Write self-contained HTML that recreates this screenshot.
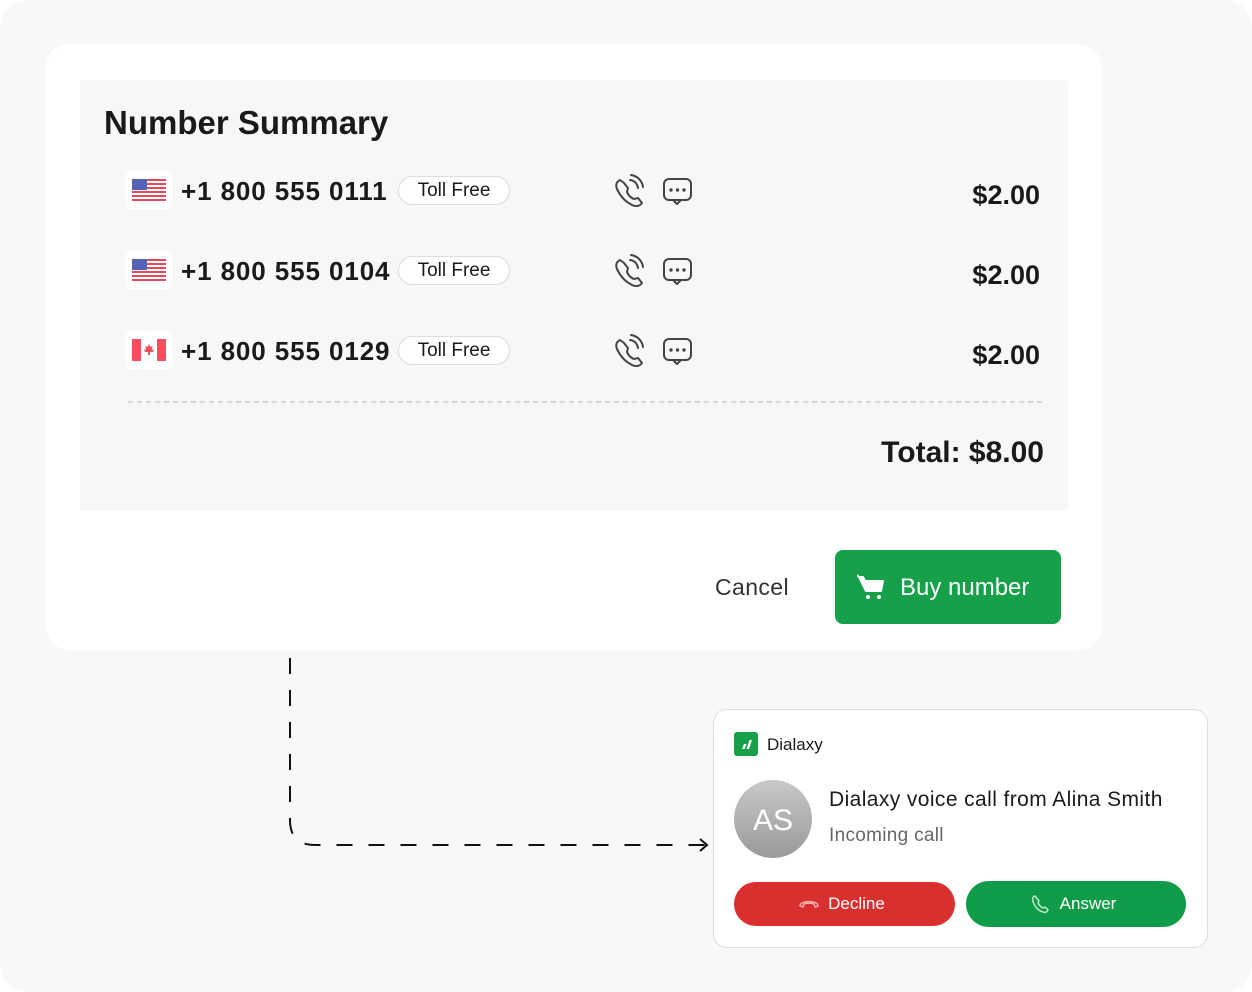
<!DOCTYPE html>
<html><head><style>
*{margin:0;padding:0;box-sizing:border-box}
body{width:1252px;height:992px;background:#fff;font-family:"Liberation Sans",sans-serif;position:relative;overflow:hidden;color:#1a1a1a}
.bg{position:absolute;left:0;top:0;width:1252px;height:992px;background:#f7f8fa;border-radius:28px}
.card{position:absolute;left:46px;top:44px;width:1056px;height:606px;background:#fff;border-radius:24px}
.panel{position:absolute;left:80px;top:80px;width:988px;height:431px;background:#f7f7f7;border-radius:4px}
.abs{position:absolute}
.title{left:104px;top:104px;font-size:33px;font-weight:bold;letter-spacing:0px}
.flag{width:46px;height:38px;background:#fff;border-radius:6px;position:absolute;left:126px}
.num{position:absolute;left:181px;font-size:26px;font-weight:bold;letter-spacing:0.9px}
.pill{position:absolute;left:398px;width:112px;height:29px;border:1px solid #ddd;border-radius:15px;background:#fff;font-size:19px;text-align:center;line-height:27px}
.price{position:absolute;right:212px;font-size:27px;font-weight:bold}
.ic{position:absolute}
</style></head><body>
<div class="bg"></div>
<div class="card"></div>
<div class="panel"></div>
<div class="abs title">Number Summary</div>

<div class="flag" style="top:171px"><svg class="abs" style="left:6px;top:8px" width="34" height="22" viewBox="0 0 34 22"><rect width="34" height="22" fill="#fff" rx="2"/><g fill="#e5485b"><rect y="0" width="34" height="2"/><rect y="4" width="34" height="2"/><rect y="8" width="34" height="2"/><rect y="12" width="34" height="2"/><rect y="16" width="34" height="2"/><rect y="20" width="34" height="2"/></g><rect width="15" height="11" fill="#5561b5"/></svg></div>
<div class="num" style="top:176px">+1 800 555 0111</div>
<div class="pill" style="top:176px">Toll Free</div>
<div class="flag" style="top:251px"><svg class="abs" style="left:6px;top:8px" width="34" height="22" viewBox="0 0 34 22"><rect width="34" height="22" fill="#fff" rx="2"/><g fill="#e5485b"><rect y="0" width="34" height="2"/><rect y="4" width="34" height="2"/><rect y="8" width="34" height="2"/><rect y="12" width="34" height="2"/><rect y="16" width="34" height="2"/><rect y="20" width="34" height="2"/></g><rect width="15" height="11" fill="#5561b5"/></svg></div>
<div class="num" style="top:256px">+1 800 555 0104</div>
<div class="pill" style="top:256px">Toll Free</div>
<div class="flag" style="top:331px"><svg class="abs" style="left:6px;top:8px" width="34" height="22" viewBox="0 0 34 22"><rect width="34" height="22" fill="#fff"/><rect width="9" height="22" fill="#f0505f"/><rect x="25" width="9" height="22" fill="#f0505f"/><path d="M17 5l1.5 3 2-1-0.5 4 2-1-1 3h-3v3h-2v-3h-3l-1-3 2 1-0.5-4 2 1z" fill="#f0505f"/></svg></div>
<div class="num" style="top:336px">+1 800 555 0129</div>
<div class="pill" style="top:336px">Toll Free</div>

<svg class="ic" style="left:0;top:0" width="1252" height="992">
<g fill="none" stroke="#444" stroke-width="2" stroke-linecap="round" stroke-linejoin="round">
<g id="r1">
<path d="M620 180c-4 2-5 6-2 11 3 6 8 11 14 14 4 2 8 1 10-2l-4-5-4 1c-3-1-6-4-7-7l1-4-4-5z"/>
<path d="M630 180a9 9 0 0 1 8 8M631 175a14 14 0 0 1 12 12"/>
<rect x="664" y="179" width="27" height="21" rx="5"/><path d="M673 200l4 4 4-4"/>
</g>
<use href="#r1" y="80"/><use href="#r1" y="160"/>
</g>
<g fill="#444"><circle cx="671" cy="190" r="1.7"/><circle cx="677.5" cy="190" r="1.7"/><circle cx="684" cy="190" r="1.7"/>
<circle cx="671" cy="270" r="1.7"/><circle cx="677.5" cy="270" r="1.7"/><circle cx="684" cy="270" r="1.7"/>
<circle cx="671" cy="350" r="1.7"/><circle cx="677.5" cy="350" r="1.7"/><circle cx="684" cy="350" r="1.7"/></g>
<line x1="128" y1="402" x2="1044" y2="402" stroke="#ccc" stroke-width="1.5" stroke-dasharray="5 4"/>
<path d="M290 658V820q0 25 25 25H706" fill="none" stroke="#111" stroke-width="2" stroke-dasharray="16 16"/>
<path d="M700 839l7 6-7 6" fill="none" stroke="#111" stroke-width="2"/>
</svg>

<div class="price" style="top:180px">$2.00</div>
<div class="price" style="top:260px">$2.00</div>
<div class="price" style="top:340px">$2.00</div>
<div class="abs" style="right:208px;top:436px;font-size:30px;font-weight:bold">Total: $8.00</div>

<div class="abs" style="left:715px;top:574px;font-size:23px;color:#333;letter-spacing:0.4px">Cancel</div>
<div class="abs" style="left:835px;top:550px;width:226px;height:74px;background:#16a04a;border-radius:8px;color:#fff;font-size:24px;line-height:76px;padding-left:65px">Buy number</div>
<svg class="abs" style="left:857px;top:574px" width="30" height="28" viewBox="0 0 30 28"><path d="M2 3h4l2 4h18l-2 10H9z" fill="#fff" stroke="#fff" stroke-width="2" stroke-linejoin="round"/><path d="M2 3L0 1" stroke="#fff" stroke-width="2"/><circle cx="11" cy="23" r="2" fill="#fff"/><circle cx="22" cy="23" r="2" fill="#fff"/></svg>

<div class="abs" style="left:713px;top:709px;width:495px;height:239px;background:#fff;border:1px solid #ddd;border-radius:14px"></div>
<div class="abs" style="left:734px;top:732px;width:24px;height:24px;background:#16a04a;border-radius:3px"></div>
<svg class="abs" style="left:734px;top:732px" width="24" height="24"><path d="M8 17l2-5h2.5l-2 5zM12.5 17l3-9h2.5l-3 9z" fill="#fff"/></svg>
<div class="abs" style="left:767px;top:735px;font-size:17px">Dialaxy</div>
<div class="abs" style="left:734px;top:780px;width:78px;height:78px;border-radius:50%;background:linear-gradient(#c8c8c8,#9a9a9a);color:#fff;font-size:30px;text-align:center;line-height:82px">AS</div>
<div class="abs" style="left:829px;top:788px;font-size:21px;letter-spacing:0.4px">Dialaxy voice call from Alina Smith</div>
<div class="abs" style="left:829px;top:825px;font-size:19px;color:#666;letter-spacing:0.3px">Incoming call</div>
<div class="abs" style="left:734px;top:882px;width:221px;height:44px;background:#d92f2f;border-radius:22px;color:#fff;font-size:17px;line-height:44px;text-align:center;padding-left:24px">Decline</div>
<svg class="abs" style="left:798px;top:895px" width="22" height="16"><path d="M2 11c0-6 18-6 18 0l-3 1-1-3c-3-1-7-1-10 0l-1 3z" fill="none" stroke="#f6b0b0" stroke-width="1.5" stroke-linejoin="round"/></svg>
<div class="abs" style="left:966px;top:881px;width:220px;height:46px;background:#109b49;border-radius:23px;color:#fff;font-size:17px;line-height:46px;text-align:center;padding-left:24px">Answer</div>
<svg class="abs" style="left:1030px;top:893px" width="22" height="22"><path d="M5 3c-3 1-3 4-1 8 2 4 5 7 9 8 2 1 4 0 5-2l-3-3-2 1c-2-1-4-3-5-5l1-2z" fill="none" stroke="#bfe8cc" stroke-width="1.5" stroke-linejoin="round"/></svg>
</body></html>
